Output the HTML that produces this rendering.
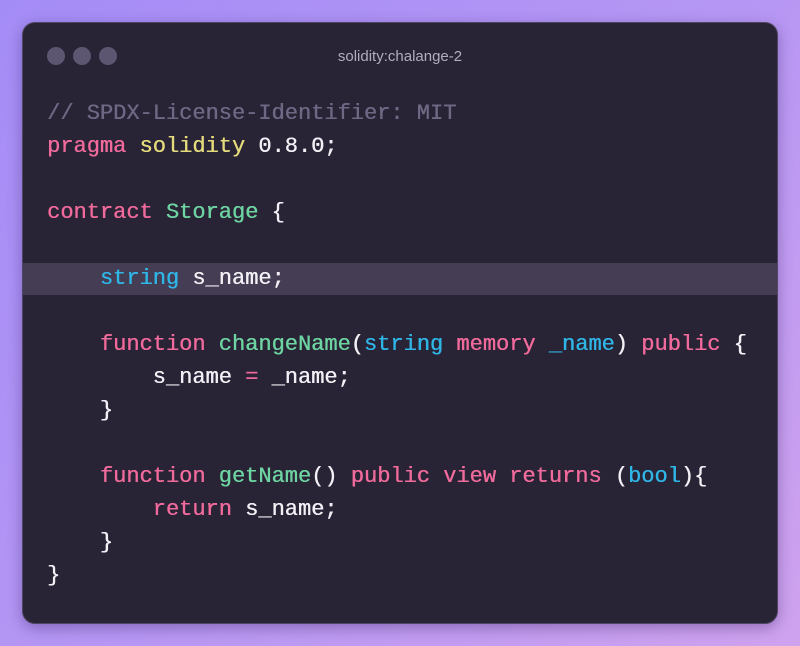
<!DOCTYPE html>
<html><head><style>
html,body{margin:0;padding:0}
body{width:800px;height:646px;background:linear-gradient(135deg,#a48cf6 0%,#b596f4 50%,#cfa2ee 100%);position:relative;overflow:hidden}
.win{position:absolute;left:22px;top:22px;width:754px;height:600px;background:#292336;border:1px solid #4e4662;border-radius:13px;box-shadow:0 4px 14px rgba(40,20,80,.35);overflow:hidden}
.dot{position:absolute;top:24px;width:18px;height:18px;border-radius:50%;background:#5c5670}
.title{position:absolute;top:25px;left:0;width:754px;text-align:center;font:15px "Liberation Sans",sans-serif;color:#b2acc0}
.hl{position:absolute;left:0;top:240px;width:754px;height:32px;background:#443d54}
pre{position:absolute;left:24px;top:74px;margin:0;font:22px/33px "Liberation Mono",monospace;color:#f2f0f5;text-shadow:0.4px 0 0 currentColor}
.c{color:#6f6884}.p{color:#f06a9b}.y{color:#e4dc7c}.g{color:#6dd4a1}.b{color:#2fb6e6}
</style></head><body>
<div class="win">
<div class="dot" style="left:24px"></div><div class="dot" style="left:50px"></div><div class="dot" style="left:76px"></div>
<div class="title">solidity:chalange-2</div>
<div class="hl"></div>
<pre><span class="c">// SPDX-License-Identifier: MIT</span>
<span class="p">pragma</span> <span class="y">solidity</span> 0.8.0;

<span class="p">contract</span> <span class="g">Storage</span> {

    <span class="b">string</span> s_name;

    <span class="p">function</span> <span class="g">changeName</span>(<span class="b">string</span> <span class="p">memory</span> <span class="b">_name</span>) <span class="p">public</span> {
        s_name <span class="p">=</span> _name;
    }

    <span class="p">function</span> <span class="g">getName</span>() <span class="p">public</span> <span class="p">view</span> <span class="p">returns</span> (<span class="b">bool</span>){
        <span class="p">return</span> s_name;
    }
}</pre>
</div>
</body></html>
